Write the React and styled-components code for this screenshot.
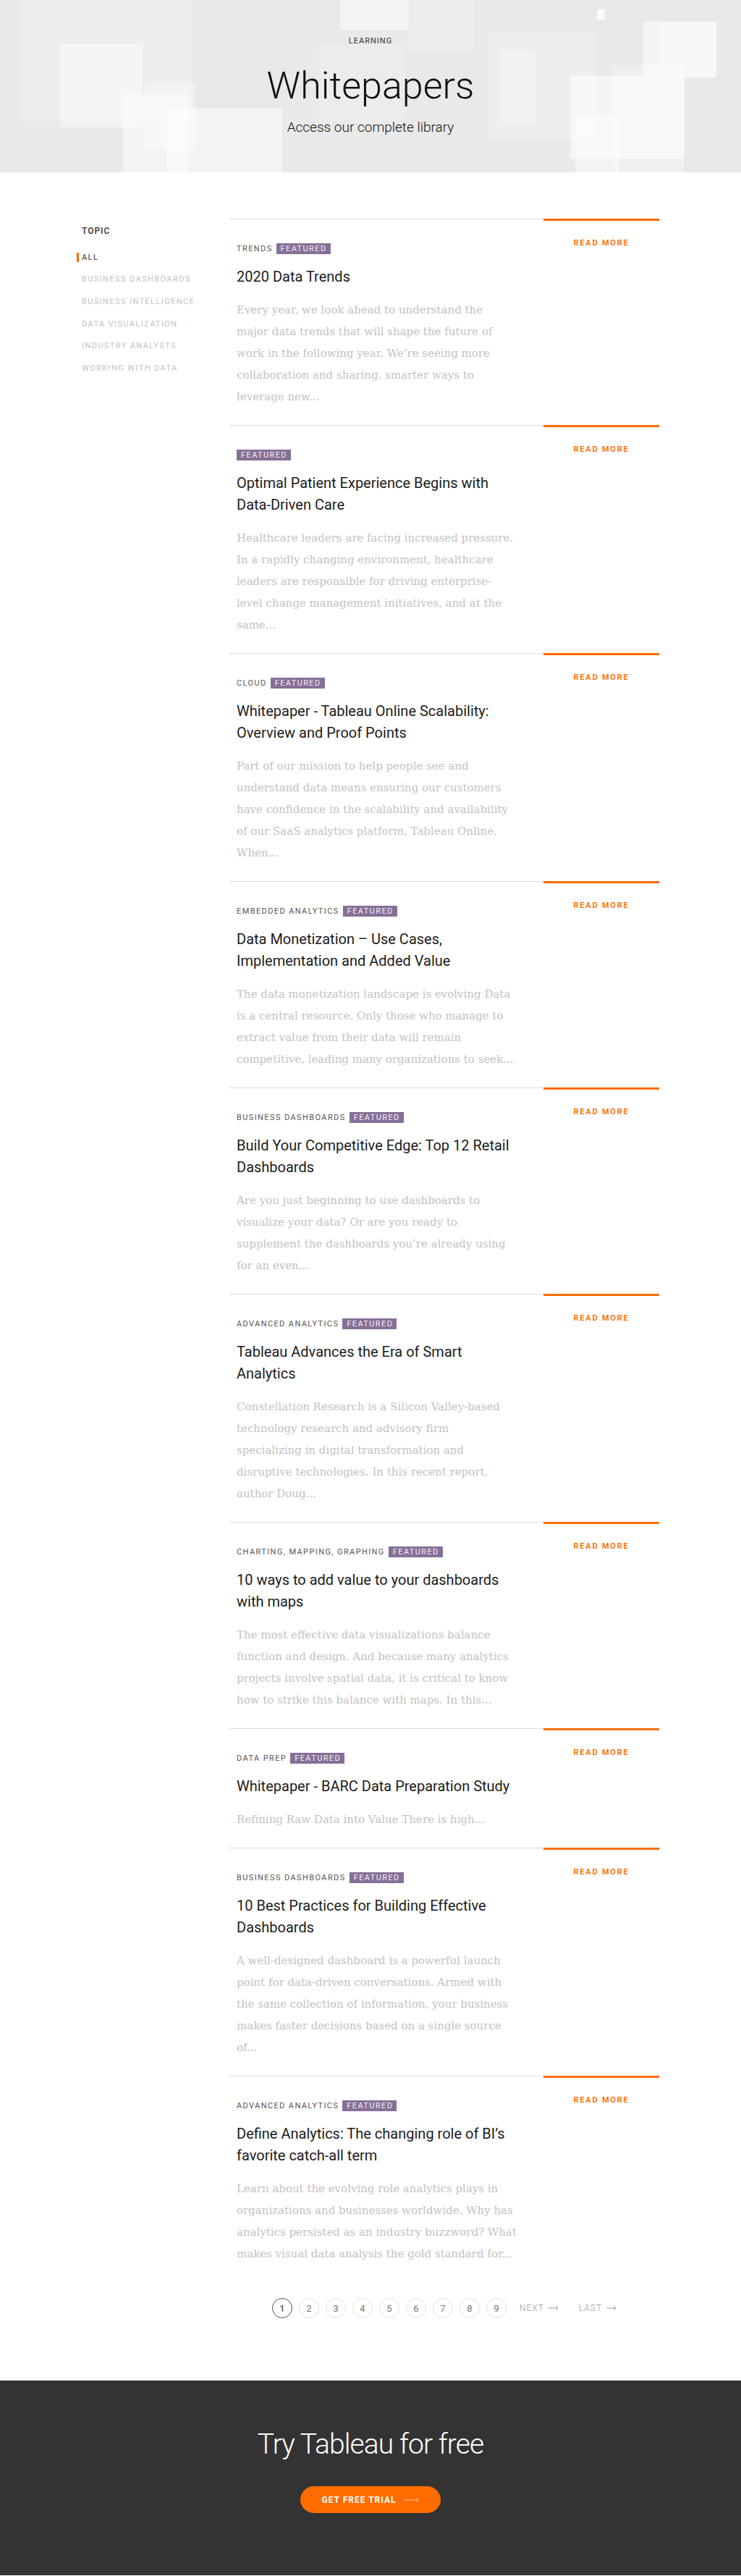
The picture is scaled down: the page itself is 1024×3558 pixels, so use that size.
import React from 'react';
import styled, {createGlobalStyle} from 'styled-components';

const ORANGE = '#fe6c00';
const SANS = "Roboto, 'Liberation Sans', Arial, sans-serif";
const SERIF = "'DejaVu Serif', 'Liberation Serif', serif";

const GlobalStyle = createGlobalStyle`
  body {
    margin: 0;
    font-family: ${SANS};
    background: #fff;
  }
  * {
    box-sizing: border-box;
  }
`;

const TOPICS = [
  'All',
  'Business Dashboards',
  'Business Intelligence',
  'Data Visualization',
  'Industry Analysts',
  'Working with Data'
];

const ARTICLES = [
  {
    tag: 'Trends',
    title: ['2020 Data Trends'],
    body: [
      'Every year, we look ahead to understand the',
      'major data trends that will shape the future of',
      'work in the following year. We\u2019re seeing more',
      'collaboration and sharing, smarter ways to',
      'leverage new...'
    ]
  },
  {
    tag: null,
    title: ['Optimal Patient Experience Begins with', 'Data-Driven Care'],
    body: [
      'Healthcare leaders are facing increased pressure.',
      'In a rapidly changing environment, healthcare',
      'leaders are responsible for driving enterprise-',
      'level change management initiatives, and at the',
      'same...'
    ]
  },
  {
    tag: 'Cloud',
    title: ['Whitepaper - Tableau Online Scalability:', 'Overview and Proof Points'],
    body: [
      'Part of our mission to help people see and',
      'understand data means ensuring our customers',
      'have confidence in the scalability and availability',
      'of our SaaS analytics platform, Tableau Online.',
      'When...'
    ]
  },
  {
    tag: 'Embedded Analytics',
    title: ['Data Monetization \u2013 Use Cases,', 'Implementation and Added Value'],
    body: [
      'The data monetization landscape is evolving Data',
      'is a central resource. Only those who manage to',
      'extract value from their data will remain',
      'competitive, leading many organizations to seek...'
    ]
  },
  {
    tag: 'Business Dashboards',
    title: ['Build Your Competitive Edge: Top 12 Retail', 'Dashboards'],
    body: [
      'Are you just beginning to use dashboards to',
      'visualize your data? Or are you ready to',
      'supplement the dashboards you\u2019re already using',
      'for an even...'
    ]
  },
  {
    tag: 'Advanced Analytics',
    title: ['Tableau Advances the Era of Smart', 'Analytics'],
    body: [
      'Constellation Research is a Silicon Valley-based',
      'technology research and advisory firm',
      'specializing in digital transformation and',
      'disruptive technologies. In this recent report,',
      'author Doug...'
    ]
  },
  {
    tag: 'Charting, Mapping, Graphing',
    title: ['10 ways to add value to your dashboards', 'with maps'],
    body: [
      'The most effective data visualizations balance',
      'function and design. And because many analytics',
      'projects involve spatial data, it is critical to know',
      'how to strike this balance with maps. In this...'
    ]
  },
  {
    tag: 'Data Prep',
    title: ['Whitepaper - BARC Data Preparation Study'],
    body: ['Refining Raw Data into Value There is high...']
  },
  {
    tag: 'Business Dashboards',
    title: ['10 Best Practices for Building Effective', 'Dashboards'],
    body: [
      'A well-designed dashboard is a powerful launch',
      'point for data-driven conversations. Armed with',
      'the same collection of information, your business',
      'makes faster decisions based on a single source',
      'of...'
    ]
  },
  {
    tag: 'Advanced Analytics',
    title: ['Define Analytics: The changing role of BI\u2019s', 'favorite catch-all term'],
    body: [
      'Learn about the evolving role analytics plays in',
      'organizations and businesses worldwide. Why has',
      'analytics persisted as an industry buzzword? What',
      'makes visual data analysis the gold standard for...'
    ]
  }
];

// decorative squares behind the hero text: [x, y, w, h, opacity]
const SQUARES = [
  [28, 0, 238, 167, 0.22],
  [82, 61, 115, 115, 0.4],
  [170, 130, 90, 108, 0.45],
  [200, 117, 70, 90, 0.35],
  [230, 150, 160, 88, 0.5],
  [470, 0, 95, 42, 0.5],
  [565, 0, 90, 70, 0.2],
  [440, 60, 120, 110, 0.15],
  [676, 46, 147, 147, 0.22],
  [690, 70, 50, 100, 0.25],
  [788, 105, 158, 114, 0.55],
  [845, 90, 100, 148, 0.3],
  [889, 30, 101, 77, 0.55],
  [912, 30, 78, 77, 0.2],
  [825, 13, 11, 14, 0.75],
  [795, 160, 60, 78, 0.45]
];

const Hero = styled.header`
  position: relative;
  height: 238px;
  background: #e9e9e9;
  overflow: hidden;
  display: flex;
  flex-direction: column;
  align-items: center;
  padding-top: 50px;
`;

const HeroBackdrop = styled.svg`
  position: absolute;
  inset: 0;
  width: 100%;
  height: 100%;
`;

const Eyebrow = styled.div`
  position: relative;
  font-size: 11px;
  line-height: 14px;
  letter-spacing: 1px;
  color: #333;
`;

const HeroTitle = styled.h1`
  position: relative;
  margin: 25px 0 0;
  font-size: 52px;
  line-height: 60px;
  font-weight: 300;
  color: #111;
`;

const HeroSub = styled.p`
  position: relative;
  margin: 15px 0 0;
  font-size: 19px;
  line-height: 24px;
  font-weight: 300;
  color: #111;
`;

const Main = styled.main`
  display: flex;
  padding: 64px 0 0 106px;
`;

const Sidebar = styled.aside`
  width: 211px;
  flex-shrink: 0;
  padding-top: 10px;
`;

const SidebarHeading = styled.div`
  font-size: 12px;
  line-height: 14px;
  font-weight: 500;
  letter-spacing: 1px;
  color: #333;
  padding-left: 7px;
`;

const TopicList = styled.ul`
  list-style: none;
  margin: 14px 0 0;
  padding: 0;
`;

const TopicItem = styled.li`
  display: flex;
  align-items: center;
  height: 30.6px;
  font-size: 11px;
  letter-spacing: 1.4px;
  text-transform: uppercase;
  color: ${p => (p.$active ? '#333' : '#c2c2c2')};
`;

const TopicLabel = styled.span`
  display: inline-block;
  line-height: 13px;
  border-left: 3px solid ${p => (p.$active ? ORANGE : 'transparent')};
  padding-left: 4px;
`;

const ListColumn = styled.section`
  width: 594px;
  flex-shrink: 0;
`;

const ArticleRow = styled.article`
  display: grid;
  grid-template-columns: 434px 160px;
`;

const ArticleBody = styled.div`
  border-top: 1px solid #dcdcdc;
  padding: 32px 20px 24px 10px;
`;

const TagRow = styled.div`
  display: flex;
  align-items: center;
  height: 16px;
  font-size: 11px;
  letter-spacing: 1.4px;
  text-transform: uppercase;
  color: #555;
`;

const Category = styled.span`
  margin-right: 5px;
`;

const Badge = styled.span`
  display: inline-block;
  height: 15px;
  line-height: 15px;
  padding: 0 5px 0 6px;
  background: #866f97;
  color: #f3f0f5;
`;

const Title = styled.h2`
  margin: 16px 0 0;
  font-size: 20px;
  line-height: 30px;
  font-weight: 400;
  color: #1c1c1c;
`;

const Line = styled.span`
  display: block;
  white-space: nowrap;
`;

const Excerpt = styled.p`
  margin: 16px 0 0;
  font-family: ${SERIF};
  font-size: 15px;
  line-height: 30px;
  color: #c2c2c2;
`;

const ReadMore = styled.a`
  display: block;
  border-top: 3px solid ${ORANGE};
  padding-top: 24px;
  text-align: center;
  font-size: 11px;
  line-height: 14px;
  font-weight: 600;
  letter-spacing: 1.8px;
  color: ${ORANGE};
  text-decoration: none;
`;

const Pager = styled.nav`
  display: flex;
  justify-content: center;
  align-items: center;
  margin: 22px 0 0;
`;

const PageCircle = styled.span`
  width: 28px;
  height: 28px;
  border-radius: 50%;
  border: 1px solid ${p => (p.$current ? '#555' : '#e0e0e0')};
  display: flex;
  align-items: center;
  justify-content: center;
  font-size: 13px;
  color: ${p => (p.$current ? '#333' : '#777')};
  margin-right: 9px;
`;

const PageLink = styled.span`
  display: inline-flex;
  align-items: center;
  gap: 6px;
  font-size: 12px;
  font-weight: 300;
  letter-spacing: 1px;
  color: #999;
  margin-left: ${p => p.$gap}px;
`;

const Footer = styled.footer`
  margin-top: 86px;
  background: #333;
  padding: 64px 0 86px;
  display: flex;
  flex-direction: column;
  align-items: center;
`;

const FooterTitle = styled.h2`
  margin: 0;
  font-size: 39px;
  line-height: 48px;
  font-weight: 300;
  letter-spacing: -0.9px;
  color: #fff;
`;

const TrialButton = styled.a`
  margin-top: 34px;
  width: 194px;
  height: 37px;
  border-radius: 19px;
  background: ${ORANGE};
  display: flex;
  align-items: center;
  justify-content: center;
  gap: 11px;
  font-size: 12px;
  font-weight: 700;
  letter-spacing: 1px;
  color: #fff;
  text-decoration: none;
`;

function Arrow({width = 14, color = 'currentColor'}) {
  return (
    <svg width={width} height="8" viewBox={`0 0 ${width} 8`} fill="none">
      <path d={`M0 4H${width - 1}M${width - 4} 1l3 3-3 3`} stroke={color} strokeWidth="1" />
    </svg>
  );
}

export default function App() {
  return (
    <>
      <GlobalStyle />
      <Hero>
        <HeroBackdrop viewBox="0 0 1024 238" preserveAspectRatio="none">
          {SQUARES.map(([x, y, w, h, o], i) => (
            <rect key={i} x={x} y={y} width={w} height={h} fill="#fff" opacity={o} />
          ))}
        </HeroBackdrop>
        <Eyebrow>LEARNING</Eyebrow>
        <HeroTitle>Whitepapers</HeroTitle>
        <HeroSub>Access our complete library</HeroSub>
      </Hero>

      <Main>
        <Sidebar>
          <SidebarHeading>TOPIC</SidebarHeading>
          <TopicList>
            {TOPICS.map((t, i) => (
              <TopicItem key={t} $active={i === 0}>
                <TopicLabel $active={i === 0}>{t}</TopicLabel>
              </TopicItem>
            ))}
          </TopicList>
        </Sidebar>

        <ListColumn>
          {ARTICLES.map((a, i) => (
            <ArticleRow key={i}>
              <ArticleBody>
                <TagRow>
                  {a.tag && <Category>{a.tag}</Category>}
                  <Badge>Featured</Badge>
                </TagRow>
                <Title>
                  {a.title.map(l => (
                    <Line key={l}>{l}</Line>
                  ))}
                </Title>
                <Excerpt>
                  {a.body.map(l => (
                    <Line key={l}>{l}</Line>
                  ))}
                </Excerpt>
              </ArticleBody>
              <div>
                <ReadMore href="#">READ MORE</ReadMore>
              </div>
            </ArticleRow>
          ))}

          <Pager>
            {[1, 2, 3, 4, 5, 6, 7, 8, 9].map(n => (
              <PageCircle key={n} $current={n === 1}>
                {n}
              </PageCircle>
            ))}
            <PageLink $gap={9}>
              NEXT <Arrow />
            </PageLink>
            <PageLink $gap={28}>
              LAST <Arrow />
            </PageLink>
          </Pager>
        </ListColumn>
      </Main>

      <Footer>
        <FooterTitle>Try Tableau for free</FooterTitle>
        <TrialButton href="#">
          GET FREE TRIAL <Arrow width={21} color="rgba(255,255,255,0.6)" />
        </TrialButton>
      </Footer>
    </>
  );
}
